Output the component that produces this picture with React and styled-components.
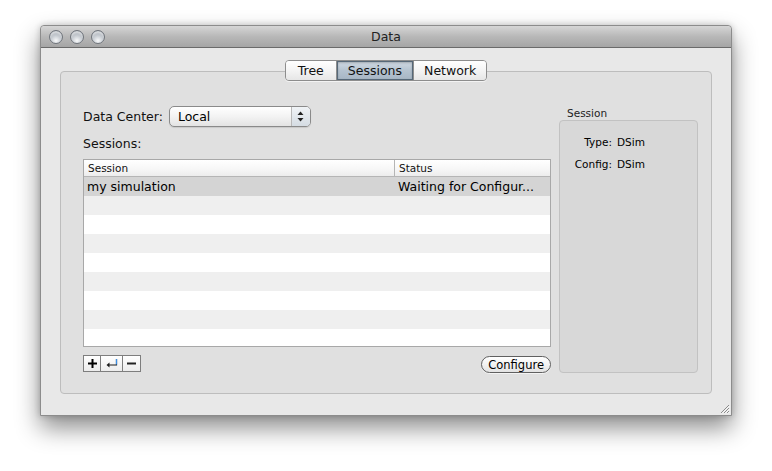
import React from 'react';
import styled, { createGlobalStyle } from 'styled-components';

const GlobalStyle = createGlobalStyle`
  html, body {
    margin: 0;
    padding: 0;
    background: #ffffff;
  }
  body {
    font-family: "DejaVu Sans", "Liberation Sans", sans-serif;
    color: #000;
  }
`;

const Page = styled.div`
  width: 772px;
  height: 471px;
  padding: 25px 0 0 40px;
  box-sizing: border-box;
`;

const Window = styled.div`
  width: 692px;
  height: 391px;
  display: flex;
  flex-direction: column;
  background: #e8e8e8;
  border: 1px solid #8c8c8c;
  box-sizing: border-box;
  border-radius: 4px 4px 0 0;
  box-shadow: 0 12px 24px rgba(0, 0, 0, 0.45), 0 0 6px rgba(0, 0, 0, 0.2);
  position: relative;
`;

const TitleBar = styled.div`
  height: 21px;
  flex: none;
  display: flex;
  align-items: center;
  position: relative;
  border-radius: 4px 4px 0 0;
  background: linear-gradient(#d6d6d6, #b8b8b8 50%, #a5a5a5);
  border-bottom: 1px solid #6a6a6a;
`;

const Lights = styled.div`
  display: flex;
  gap: 7px;
  padding-left: 8px;
`;

const Light = styled.span`
  width: 14px;
  height: 14px;
  border-radius: 50%;
  box-sizing: border-box;
  border: 1px solid #70757c;
  background: radial-gradient(circle at 50% 80%, #f8f9fa 0%, #c6cbd1 45%, #8d949c 100%);
  box-shadow: inset 0 2px 2px rgba(255, 255, 255, 0.6);
`;

const Title = styled.div`
  position: absolute;
  left: 0;
  right: 0;
  text-align: center;
  font-size: 12.5px;
  color: #222;
  pointer-events: none;
`;

const Content = styled.div`
  flex: 1;
  padding: 12px 19px 21px 19px;
  display: flex;
  flex-direction: column;
`;

const TabBar = styled.div`
  display: flex;
  justify-content: center;
  position: relative;
  z-index: 1;
  height: 21px;
`;

const Segments = styled.div`
  display: flex;
  border: 1px solid #8d8d8d;
  border-radius: 4px;
  overflow: hidden;
  box-shadow: 0 1px 0 rgba(255, 255, 255, 0.6);
`;

const Segment = styled.div`
  height: 19px;
  box-sizing: border-box;
  padding: 0 ${p => p.$pad}px;
  display: flex;
  align-items: center;
  font-size: 12.5px;
  color: #111;
  border-left: ${p => (p.$first ? 'none' : '1px solid #8d8d8d')};
  background: ${p =>
    p.$active
      ? 'linear-gradient(#d3dce5, #b5c3d0 50%, #a6b5c4)'
      : 'linear-gradient(#ffffff, #f4f4f4 50%, #e6e6e6)'};
  box-shadow: ${p => (p.$active ? 'inset 0 0 0 1px #566878, inset 0 1px 3px rgba(0,0,0,0.45)' : 'none')};
`;

const TabBox = styled.div`
  flex: 1;
  margin-top: -10px;
  border: 1px solid #bdbdbd;
  border-radius: 4px;
  background: #e0e0e0;
  display: flex;
  padding: 34px 13px 20px 22px;
  gap: 8px;
`;

const LeftCol = styled.div`
  width: 468px;
  display: flex;
  flex-direction: column;
`;

const Row = styled.div`
  display: flex;
  align-items: center;
  gap: 6px;
`;

const Label = styled.div`
  font-size: 12.5px;
  color: #111;
`;

const Popup = styled.div`
  width: 142px;
  height: 21px;
  box-sizing: border-box;
  border: 1px solid #8a8a8a;
  border-radius: 5px;
  background: linear-gradient(#ffffff, #f3f3f3 50%, #e3e3e3);
  display: flex;
  align-items: center;
  overflow: hidden;
  box-shadow: 0 1px 1px rgba(0, 0, 0, 0.1);
`;

const PopupText = styled.div`
  flex: 1;
  padding-left: 8px;
  font-size: 12.5px;
`;

const PopupArrows = styled.div`
  width: 18px;
  height: 100%;
  border-left: 1px solid #b8b8b8;
  display: flex;
  align-items: center;
  justify-content: center;
  background: linear-gradient(#f0f3f6, #d5dce3);
`;

const SessionsLabel = styled(Label)`
  margin-top: 9px;
  margin-bottom: 8px;
`;

const Table = styled.div`
  height: 186px;
  border: 1px solid #a8a8a8;
  background: #fff;
  display: flex;
  flex-direction: column;
  overflow: hidden;
`;

const Header = styled.div`
  height: 16px;
  flex: none;
  display: grid;
  grid-template-columns: 310px 1fr;
  border-bottom: 1px solid #b5b5b5;
  background: linear-gradient(#ffffff, #f6f6f6 60%, #ececec);
`;

const HeaderCell = styled.div`
  font-size: 10.5px;
  padding-left: 4px;
  display: flex;
  align-items: center;
  color: #111;
  border-left: ${p => (p.$sep ? '1px solid #b5b5b5' : 'none')};
`;

const DataRow = styled.div`
  height: 19px;
  flex: none;
  display: grid;
  grid-template-columns: 310px 1fr;
  background: ${p => p.$bg};
`;

const Cell = styled.div`
  font-size: 12.5px;
  padding-left: ${p => p.$pad}px;
  display: flex;
  align-items: center;
  white-space: nowrap;
  overflow: hidden;
`;

const Bottom = styled.div`
  margin-top: 8px;
  display: flex;
  justify-content: space-between;
  align-items: flex-start;
`;

const SmallButtons = styled.div`
  display: flex;
  border: 1px solid #7e7e7e;
  height: 17px;
  box-sizing: border-box;
`;

const SmallButton = styled.div`
  width: ${p => p.$w}px;
  height: 100%;
  display: flex;
  align-items: center;
  justify-content: center;
  border-left: ${p => (p.$first ? 'none' : '1px solid #7e7e7e')};
  background: linear-gradient(#ffffff, #ececec);
`;

const PillButton = styled.div`
  margin-top: 1px;
  height: 17px;
  box-sizing: border-box;
  padding: 0 6px;
  border: 1px solid #606060;
  border-radius: 9px;
  font-size: 11.5px;
  display: flex;
  align-items: center;
  background: linear-gradient(#ffffff, #f2f2f2 50%, #e2e2e2);
  box-shadow: 0 1px 0 rgba(255, 255, 255, 0.6);
`;

const RightCol = styled.div`
  width: 139px;
  display: flex;
  flex-direction: column;
  margin-top: -1px;
`;

const GroupTitle = styled.div`
  font-size: 10.5px;
  color: #222;
  padding-left: 8px;
  margin-top: 2px;
  margin-bottom: 1px;
`;

const GroupBox = styled.div`
  flex: 1;
  border: 1px solid #c2c2c2;
  border-radius: 4px;
  background: #d8d8d8;
  padding: 14px 0 0 0;
  display: grid;
  grid-template-columns: 52px 1fr;
  grid-auto-rows: 22px;
  column-gap: 5px;
  align-content: start;
`;

const InfoKey = styled.div`
  font-size: 10.5px;
  text-align: right;
  line-height: 14px;
`;

const InfoValue = styled.div`
  font-size: 10.5px;
  line-height: 14px;
`;

const Grip = styled.svg`
  position: absolute;
  right: 1px;
  bottom: 1px;
`;

const rows = [
  { session: 'my simulation', status: 'Waiting for Configur...', bg: '#d4d4d4' },
  { bg: '#efefef' },
  { bg: '#ffffff' },
  { bg: '#efefef' },
  { bg: '#ffffff' },
  { bg: '#efefef' },
  { bg: '#ffffff' },
  { bg: '#efefef' },
  { bg: '#ffffff' },
];

export default function App() {
  return (
    <Page>
      <GlobalStyle />
      <Window>
        <TitleBar>
          <Lights>
            <Light />
            <Light />
            <Light />
          </Lights>
          <Title>Data</Title>
        </TitleBar>
        <Content>
          <TabBar>
            <Segments>
              <Segment $first $pad={12}>Tree</Segment>
              <Segment $active $pad={11}>Sessions</Segment>
              <Segment $pad={10}>Network</Segment>
            </Segments>
          </TabBar>
          <TabBox>
            <LeftCol>
              <Row>
                <Label>Data Center:</Label>
                <Popup>
                  <PopupText>Local</PopupText>
                  <PopupArrows>
                    <svg width="7" height="11" viewBox="0 0 7 11">
                      <path d="M3.5 0.5 L6.5 4 L0.5 4 Z" fill="#222" />
                      <path d="M3.5 10.5 L6.5 7 L0.5 7 Z" fill="#222" />
                    </svg>
                  </PopupArrows>
                </Popup>
              </Row>
              <SessionsLabel>Sessions:</SessionsLabel>
              <Table>
                <Header>
                  <HeaderCell>Session</HeaderCell>
                  <HeaderCell $sep>Status</HeaderCell>
                </Header>
                {rows.map((r, i) => (
                  <DataRow key={i} $bg={r.bg}>
                    <Cell $pad={3}>{r.session}</Cell>
                    <Cell $pad={4}>{r.status}</Cell>
                  </DataRow>
                ))}
              </Table>
              <Bottom>
                <SmallButtons>
                  <SmallButton $first $w={16}>
                    <svg width="9" height="9" viewBox="0 0 9 9">
                      <path d="M4.5 0 V9 M0 4.5 H9" stroke="#000" strokeWidth="2" />
                    </svg>
                  </SmallButton>
                  <SmallButton $w={21}>
                    <svg width="12" height="9" viewBox="0 0 12 9">
                      <path d="M10.5 0 V6 H2" stroke="#1a1a1a" strokeWidth="1.2" fill="none" />
                      <path d="M10.5 0 V5.5" stroke="#3a8ee6" strokeWidth="1.2" />
                      <path d="M0.5 6 L3.5 3.5 L3.5 8.5 Z" fill="#1a1a1a" />
                    </svg>
                  </SmallButton>
                  <SmallButton $w={17}>
                    <svg width="9" height="9" viewBox="0 0 9 9">
                      <path d="M0 4.5 H9" stroke="#222" strokeWidth="2" />
                    </svg>
                  </SmallButton>
                </SmallButtons>
                <PillButton>Configure</PillButton>
              </Bottom>
            </LeftCol>
            <RightCol>
              <GroupTitle>Session</GroupTitle>
              <GroupBox>
                <InfoKey>Type:</InfoKey>
                <InfoValue>DSim</InfoValue>
                <InfoKey>Config:</InfoKey>
                <InfoValue>DSim</InfoValue>
              </GroupBox>
            </RightCol>
          </TabBox>
        </Content>
        <Grip width="11" height="11" viewBox="0 0 11 11">
          <path d="M10 2 L2 10 M10 5 L5 10 M10 8 L8 10" stroke="#8a8a8a" strokeWidth="1" />
          <path d="M10.5 3 L3 10.5 M10.5 6 L6 10.5 M10.5 9 L9 10.5" stroke="#ffffff" strokeWidth="0.8" />
        </Grip>
      </Window>
    </Page>
  );
}
